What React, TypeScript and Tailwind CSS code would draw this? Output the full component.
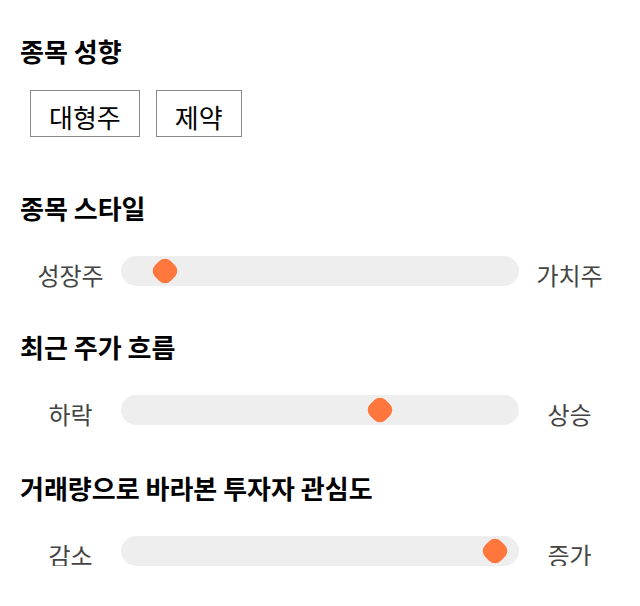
import React from "react";

const sliders = [
  { title: "종목 스타일", left: "성장주", right: "가치주", value: 11, gap: "mt-[55px]" },
  { title: "최근 주가 흐름", left: "하락", right: "상승", value: 65, gap: "mt-[45px]" },
  { title: "거래량으로 바라본 투자자 관심도", left: "감소", right: "증가", value: 94, gap: "mt-[47px]" },
];

const tags = ["대형주", "제약"];

const Slider = ({ left, right, value }: { left: string; right: string; value: number }) => (
  <div className="flex items-center h-[30px]">
    <span className="w-[101px] text-center text-[24px] text-[#444] pt-[8px]">{left}</span>
    <div className="relative flex-1 h-[30px] rounded-full bg-[#eeeeee]">
      <div
        className="absolute top-1/2 w-[22px] h-[22px] rounded-[8px] bg-[#ff773d] -translate-x-1/2 -translate-y-1/2 rotate-45"
        style={{ left: `${value}%` }}
      />
    </div>
    <span className="w-[101px] text-center text-[24px] text-[#444] pt-[8px]">{right}</span>
  </div>
);

const App = () => {
  return (
    <section className="w-[640px] px-5 pt-[35px] bg-white font-['Noto_Sans_CJK_KR',sans-serif] text-black">
      <h2 className="text-[26px] font-bold leading-[32px]">종목 성향</h2>
      <div className="flex gap-4 mt-[23px] pl-[10px]">
        {tags.map((t) => (
          <div
            key={t}
            className="h-[47px] px-[18px] flex items-center border border-[#888] text-[26px] pt-[6px]"
          >
            {t}
          </div>
        ))}
      </div>
      {sliders.map((s) => (
        <div key={s.title} className={s.gap}>
          <h2 className="text-[26px] font-bold leading-[32px]">{s.title}</h2>
          <div className="mt-[32px]">
            <Slider left={s.left} right={s.right} value={s.value} />
          </div>
        </div>
      ))}
    </section>
  );
};

export default App;
